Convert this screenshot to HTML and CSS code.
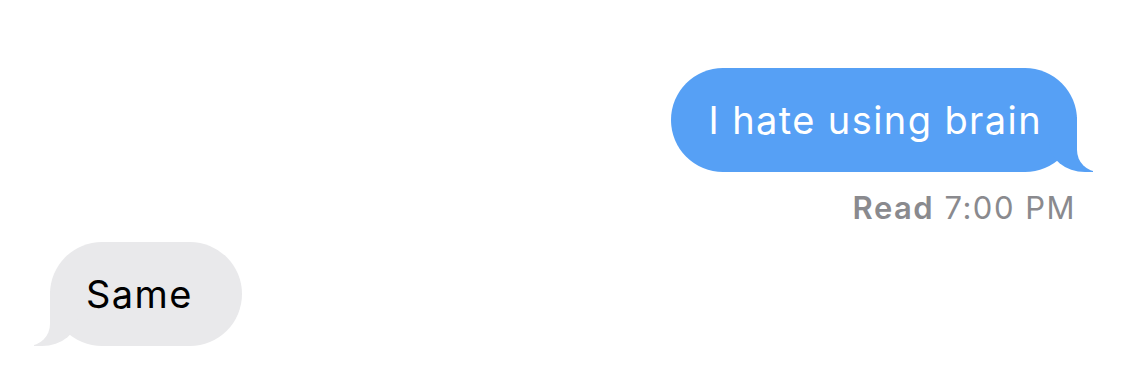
FILE: index.html
```html
<!DOCTYPE html>
<html>
<head>
<meta charset="utf-8">
<link rel="stylesheet" href="styles.css">
</head>
<body>
<div class="thread">
  <div class="row row-sent">
    <div class="bubble sent">I hate using brain</div>
  </div>
  <div class="receipt"><b>Read</b> 7:00 PM</div>
  <div class="row row-recv">
    <div class="bubble recv">Same</div>
  </div>
</div>
</body>
</html>
```

FILE: styles.css
```css
html, body {
  margin: 0;
  padding: 0;
  background: #ffffff;
}
.thread {
  width: 1125px;
  height: 374px;
  box-sizing: border-box;
  padding: 68px 48px 0 50px;
  display: flex;
  flex-direction: column;
  font-family: "Inter", "Liberation Sans", sans-serif;
  overflow: hidden;
}
.row {
  display: flex;
}
.row-sent {
  justify-content: flex-end;
}
.row-recv {
  justify-content: flex-start;
  margin-top: 17px;
}
.bubble {
  position: relative;
  height: 104px;
  box-sizing: border-box;
  display: flex;
  align-items: center;
  border-radius: 52px;
  font-size: 38px;
  line-height: 1;
  letter-spacing: 1.4px;
}
.sent {
  background: #56a0f5;
  color: #ffffff;
  padding: 0 35px 0 37px;
}
.recv {
  background: #e9e9eb;
  color: #000000;
  padding: 0 49px 0 36px;
}
.sent::before {
  content: "";
  position: absolute;
  right: -16px;
  bottom: 0;
  width: 44px;
  height: 55px;
  background: #56a0f5;
  border-bottom-left-radius: 36px 30px;
}
.sent::after {
  content: "";
  position: absolute;
  right: -60px;
  bottom: 0;
  width: 60px;
  height: 56px;
  background: #ffffff;
  border-bottom-left-radius: 22px;
}
.recv::before {
  content: "";
  position: absolute;
  left: -16px;
  bottom: 0;
  width: 44px;
  height: 55px;
  background: #e9e9eb;
  border-bottom-right-radius: 36px 30px;
}
.recv::after {
  content: "";
  position: absolute;
  left: -60px;
  bottom: 0;
  width: 60px;
  height: 56px;
  background: #ffffff;
  border-bottom-right-radius: 22px;
}
.receipt {
  align-self: flex-end;
  margin-top: 19px;
  margin-right: 1px;
  font-size: 31px;
  line-height: 34px;
  letter-spacing: 1.5px;
  color: #8a8a8e;
}
.receipt b {
  font-weight: 600;
}
```
